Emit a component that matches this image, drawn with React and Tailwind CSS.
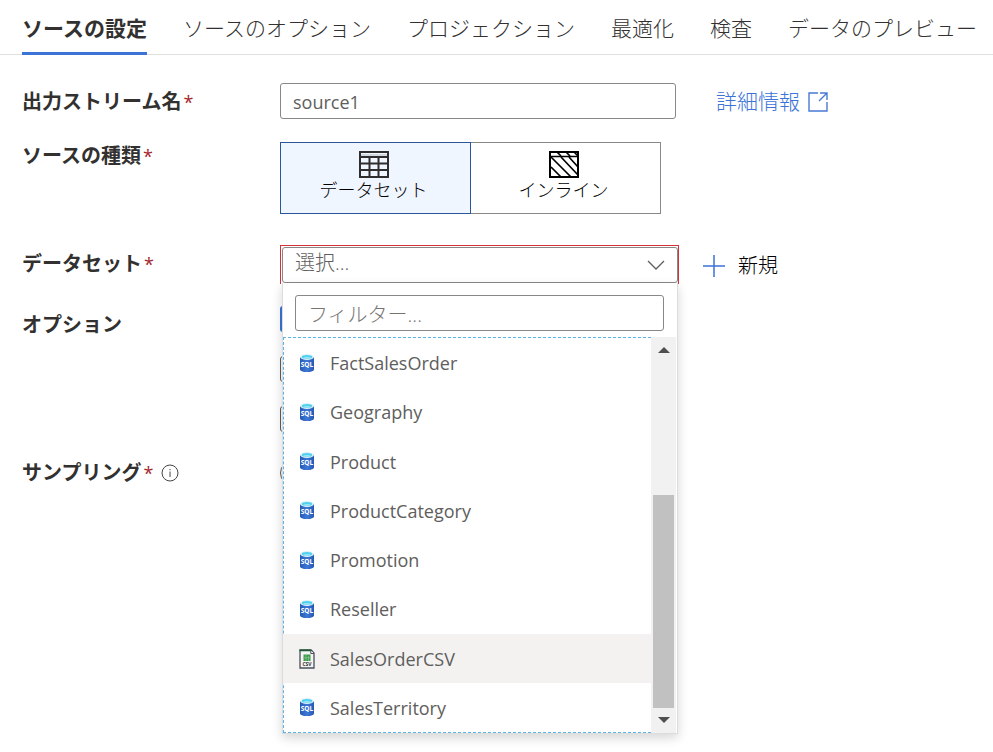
import React from "react";

const tabs = ["ソースの設定", "ソースのオプション", "プロジェクション", "最適化", "検査", "データのプレビュー"];

const datasets = [
  { name: "FactSalesOrder", type: "sql" },
  { name: "Geography", type: "sql" },
  { name: "Product", type: "sql" },
  { name: "ProductCategory", type: "sql" },
  { name: "Promotion", type: "sql" },
  { name: "Reseller", type: "sql" },
  { name: "SalesOrderCSV", type: "csv" },
  { name: "SalesTerritory", type: "sql" },
];

function SqlIcon() {
  return (
    <svg className="-mt-0.5 h-[18px] w-4 shrink-0" viewBox="0 0 16 18" aria-hidden="true">
      <defs>
        <linearGradient id="cyl" x1="0" x2="1">
          <stop offset="0" stopColor="#2459b4" />
          <stop offset="0.5" stopColor="#3f78d8" />
          <stop offset="1" stopColor="#2459b4" />
        </linearGradient>
      </defs>
      <path d="M1 3v12.4C1 16.8 4.1 18 8 18s7-1.200 7-2.600V3z" fill="url(#cyl)" />
      <ellipse cx="8" cy="3" rx="7" ry="2.900" fill="#dff1f7" />
      <ellipse cx="8" cy="3" rx="5.200" ry="1.900" fill="#4fd0ee" />
      <ellipse cx="8" cy="3.900" rx="3.500" ry="0.900" fill="#9be6f7" />
      <text x="8" y="12.500" textAnchor="middle" fontSize="6.500" fontWeight="700" fill="#fff" fontFamily="Open Sans, sans-serif">SQL</text>
    </svg>
  );
}

function CsvIcon() {
  return (
    <svg className="h-5 w-4 shrink-0" viewBox="0 0 16 20" aria-hidden="true">
      <path d="M1 1h11l3 3v15H1z" fill="#f4f4f4" stroke="#4a4f5c" strokeWidth="1.300" />
      <path d="M0.500 0.400h11.500l1.800 1.900H0.500z" fill="#1f5a35" />
      <path d="M11.800 1.500v3H15" fill="#fff" stroke="#4a4f5c" />
      <path d="M4.500 5.500h7v6.500h-7z" fill="#3d9a4c" />
      <path d="M4.500 8.800h7M7 5.500v6.500M9.500 7v5" stroke="#8cc896" strokeWidth="0.700" />
      <text x="8" y="17.300" textAnchor="middle" fontSize="5" fontWeight="700" fill="#333" fontFamily="Open Sans, sans-serif">CSV</text>
    </svg>
  );
}

function TableIcon() {
  return (
    <svg className="h-[27px] w-[30px]" viewBox="0 0 30 27" fill="none" stroke="#2f2d2e" strokeWidth="2" aria-hidden="true">
      <path d="M2 3h26v2H2z" fill="#d4d9e2" stroke="none" />
      <path d="M1 1h28v25H1z" />
      <path d="M1 6h28M1 12.500h28M1 19h28M10.500 6v20M19.500 6v20" />
    </svg>
  );
}

function HatchIcon() {
  return (
    <svg className="h-[27px] w-[30px]" viewBox="0 0 30 27" fill="none" stroke="#000" strokeWidth="2" aria-hidden="true">
      <path d="M1 1h28v25H1z" />
      <path d="M1 5.500h28" strokeWidth="1.500" />
      <path d="M2 16l10 10M2 6l20 20M8 1l4 4M12 6l17 18M17 1l4 4M20 6l9 10M25 1l4 4" strokeWidth="1.700" />
    </svg>
  );
}

function Label({ htmlFor, required, children, info }) {
  return (
    <label htmlFor={htmlFor} className="flex h-9 items-center pt-0.5 text-[20px] font-bold text-[#323130]">
      {children}
      {required && <span className="ml-0.5 text-[18px] font-normal text-[#a4262c]">*</span>}
      {info && (
        <svg className="ml-2 h-[18px] w-[18px]" viewBox="0 0 18 18" fill="none" stroke="#484644" aria-hidden="true">
          <circle cx="9" cy="9" r="8" />
          <path d="M9 7.500v5.500M9 5v1.200" />
        </svg>
      )}
    </label>
  );
}

const sourceTypeClass = "flex flex-1 flex-col items-center border pt-2 pr-1 text-[18px] leading-6 text-black";

export default function App() {
  return (
    <main className="min-h-screen bg-white font-['Open_Sans','Noto_Sans_CJK_JP',sans-serif] font-light text-[#323130]">
      <nav className="flex h-[55px] gap-9 border-b border-[#e1dfdd] pl-[22px] text-[21px] whitespace-nowrap">
        {tabs.map((tab, i) => (
          <button
            key={tab}
            type="button"
            className={i === 0 ? "h-[55px] border-b-3 border-[#3b73d6] pt-1.5 font-bold" : "h-[55px] border-b-3 border-transparent pt-1.5"}
          >
            {tab}
          </button>
        ))}
      </nav>

      <form className="grid grid-cols-[258px_minmax(0,399px)_auto] pt-7 pl-[22px]">
        <Label htmlFor="stream" required>出力ストリーム名</Label>
        <input
          id="stream"
          defaultValue="source1"
          className="mr-[3px] h-9 rounded-[3px] border border-[#8a8886] px-3 pt-0.5 text-[18px] font-normal text-[#605e5c]"
        />
        <a href="#details" className="ml-[37px] flex h-9 items-center gap-2 pt-0.5 text-[21px] text-[#3b73d6]">
          詳細情報
          <svg className="h-5 w-5" viewBox="0 0 20 20" fill="none" stroke="#4a7ad4" strokeWidth="1.400" aria-hidden="true">
            <path d="M10 1H1v18h18v-9M12 1h7v7M19 1l-8 8" />
          </svg>
        </a>

        <div className="mt-[18px]">
          <Label required>ソースの種類</Label>
        </div>
        <div className="mt-[23px] mr-[18px] flex h-[72px]" role="group" aria-label="ソースの種類">
          <button type="button" aria-pressed="true" className={`${sourceTypeClass} border-[#2b579a] bg-[#f0f6ff]`}>
            <TableIcon />
            データセット
          </button>
          <button type="button" aria-pressed="false" className={`${sourceTypeClass} border-l-0 border-[#8a8886]`}>
            <HatchIcon />
            インライン
          </button>
        </div>
        <div />

        <div className="mt-[31px]">
          <Label htmlFor="dataset" required>データセット</Label>
        </div>
        <div className="relative mt-[31px] h-[39px] border border-b-0 border-[#d13438] pt-px pl-px">
          <select
            id="dataset"
            className="block h-9 w-full appearance-none rounded-[3px] border border-[#8a8886] bg-white px-3 pb-1 text-[20px] text-[#605e5c]"
          >
            <option>選択...</option>
          </select>
          <svg className="pointer-events-none absolute top-[11px] right-3 h-4 w-5" viewBox="0 0 20 16" fill="none" stroke="#605e5c" strokeWidth="1.300" aria-hidden="true">
            <path d="M2 4l8 8 8-8" />
          </svg>

          <div className="absolute top-[37px] right-0 left-px z-10 border border-t-0 border-[#dcdcdc] bg-white pt-3 shadow-[0_4px_10px_rgba(0,0,0,0.16)]">
            <input
              aria-label="フィルター"
              placeholder="フィルター..."
              className="mx-3 block h-9 w-[calc(100%-25px)] rounded-[3px] border border-[#8a8886] px-3 pt-0.5 text-[20px] placeholder:text-[#767472]"
            />
            <div className="mt-[6px] mr-px flex h-[396px]">
              <ul role="listbox" aria-label="データセット" className="grid min-w-0 flex-1 grid-rows-8 border border-r-0 border-dashed border-[#5ab4e8]">
                {datasets.map(({ name, type }) => (
                  <li
                    key={name}
                    role="option"
                    aria-selected={type === "csv"}
                    className={`-ml-px flex items-center gap-[15px] pt-0.5 pl-4 text-[18px] font-normal text-[#605e5c] ${type === "csv" ? "bg-[#f3f2f1]" : ""}`}
                  >
                    {type === "csv" ? <CsvIcon /> : <SqlIcon />}
                    {name}
                  </li>
                ))}
              </ul>
              <div className="flex w-[25px] flex-col items-center bg-[#f1f1f1]" aria-hidden="true">
                <svg className="mt-[10px] h-[6px] w-3" viewBox="0 0 12 6"><path d="M0 6l6-6 6 6z" fill="#505050" /></svg>
                <div className="mt-auto mb-[9px] h-[213px] w-[21px] bg-[#c1c1c1]" />
                <svg className="mb-[10px] h-[6px] w-3" viewBox="0 0 12 6"><path d="M0 0l6 6 6-6z" fill="#505050" /></svg>
              </div>
            </div>
          </div>
        </div>
        <button type="button" className="mt-[31px] ml-[23px] flex h-10 items-center gap-3 pt-0.5 text-[20px] text-black">
          <svg className="h-6 w-6" viewBox="0 0 24 24" stroke="#3b73d6" strokeWidth="1.500" aria-hidden="true">
            <path d="M12 1v22M1 12h22" />
          </svg>
          新規
        </button>

        <div className="mt-[21px]">
          <Label>オプション</Label>
        </div>
        <div className="mt-[21px] flex flex-col gap-6">
          <input type="checkbox" defaultChecked aria-label="オプション 1" className="h-[26px] w-[26px] appearance-none rounded-[3px] bg-[#3b73d6]" />
          <input type="checkbox" aria-label="オプション 2" className="h-[26px] w-[26px] appearance-none rounded-[3px] border border-[#605e5c]" />
          <input type="checkbox" aria-label="オプション 3" className="h-[26px] w-[26px] appearance-none rounded-[3px] border border-[#605e5c]" />
        </div>
        <div />

        <div className="mt-[22px]">
          <Label htmlFor="sampling" required info>サンプリング</Label>
        </div>
        <input id="sampling" type="radio" className="mt-7 h-[26px] w-[26px] appearance-none rounded-full border border-[#605e5c]" />
      </form>
    </main>
  );
}
